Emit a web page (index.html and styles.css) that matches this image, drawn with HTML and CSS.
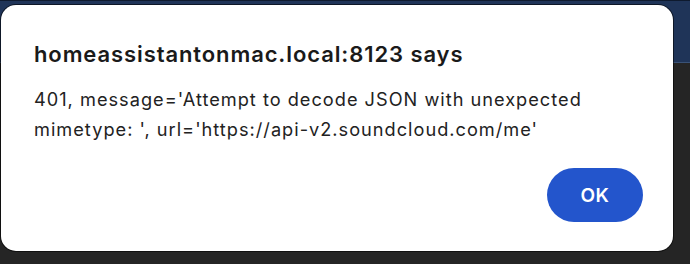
FILE: index.html
```html
<!DOCTYPE html>
<html>
<head>
<meta charset="utf-8">
<link rel="stylesheet" href="styles.css">
</head>
<body>
<div class="backdrop">
  <div class="band"></div>
  <div class="floor"></div>
</div>
<div class="dialog">
  <h1 class="title">homeassistantonmac.local:8123 says</h1>
  <p class="message">401, message='Attempt to decode JSON with unexpected mimetype: ', url='https://api-v2.soundcloud.com/me'</p>
  <div class="actions">
    <button class="ok">OK</button>
  </div>
</div>
</body>
</html>
```
FILE: styles.css
```css
html, body {
  margin: 0;
  padding: 0;
  width: 690px;
  height: 264px;
  overflow: hidden;
  background: #252525;
  font-family: Inter, "Noto Sans", sans-serif;
}
.backdrop {
  display: flex;
  flex-direction: column;
  height: 264px;
}
.band {
  height: 61px;
  background: #1f3458;
  border-top: 1px solid #0e1a2e;
  border-bottom: 1px solid #3a5276;
}
.floor {
  flex: 1;
  background: #252525;
}
.dialog {
  position: absolute;
  left: 1px;
  top: 5px;
  width: 672px;
  height: 246px;
  box-sizing: border-box;
  background: #ffffff;
  border-radius: 15px;
  box-shadow: 0 0 0 1px rgba(0,0,0,0.55);
  padding: 36px 20px 0 33px;
  display: flex;
  flex-direction: column;
}
.title {
  margin: 0;
  font-size: 22px;
  font-weight: 600;
  color: #1a1a1a;
  line-height: 26px;
  letter-spacing: 0.9px;
  white-space: nowrap;
}
.message {
  margin: 17px 0 0 0;
  font-size: 18.2px;
  font-weight: 400;
  color: #222;
  line-height: 30px;
  letter-spacing: 1px;
  width: 612px;
}
.actions {
  display: flex;
  justify-content: flex-end;
  margin-top: 24px;
}
.ok {
  width: 96px;
  height: 54px;
  border: none;
  border-radius: 27px;
  background: #2355cc;
  color: #fff;
  font-family: Inter, "Noto Sans", sans-serif;
  font-size: 19px;
  font-weight: 600;
  letter-spacing: 0.5px;
  margin-right: 10px;
}
```
